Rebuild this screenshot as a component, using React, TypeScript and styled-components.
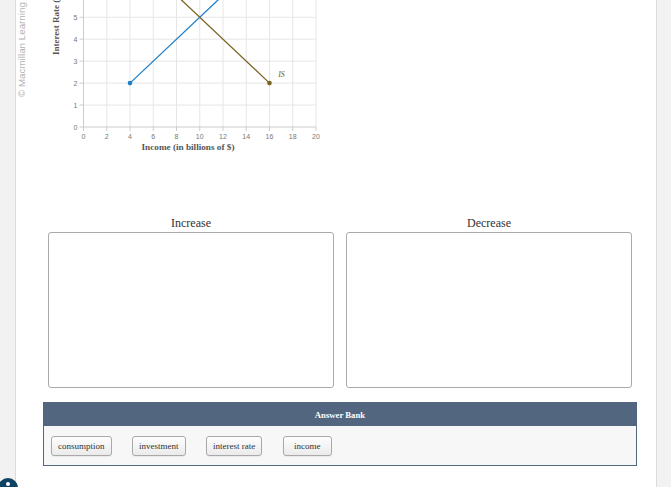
import React from "react";
import styled, { createGlobalStyle } from "styled-components";

const Global = createGlobalStyle`
  html, body { margin: 0; padding: 0; height: 487px; overflow: hidden; background: #f2f2f2; }
  #root { height: 487px; }
`;

const Page = styled.div`
  display: flex;
  height: 487px;
  position: relative;
  overflow: hidden;
`;

const Rail = styled.div<{ $side: "left" | "right" }>`
  width: ${(p) => (p.$side === "left" ? 15 : 14)}px;
  flex: none;
  background: #f2f2f2;
  ${(p) => (p.$side === "left" ? "border-right" : "border-left")}: 1px solid #dcdcdc;
`;

const Main = styled.main`
  flex: 1;
  background: #ffffff;
  display: flex;
  flex-direction: column;
`;

const ChartSvg = styled.svg`
  display: block;
  width: 320px;
  height: 160px;
  flex: none;
`;

const DropRow = styled.div`
  display: flex;
  gap: 12px;
  margin: 56px 0 0 32px;
`;

const DropColumn = styled.div`
  display: flex;
  flex-direction: column;
  width: 286px;
`;

const DropLabel = styled.div`
  font-family: "Liberation Serif", "Times New Roman", serif;
  font-size: 12px;
  line-height: 14px;
  color: #333;
  text-align: center;
  margin-bottom: 2px;
`;

const DropBox = styled.div`
  height: 156px;
  box-sizing: border-box;
  border: 1px solid #aaaaaa;
  border-radius: 3px;
  background: #fff;
`;

const Bank = styled.section`
  margin: 14px 0 0 27px;
  width: 594px;
  box-sizing: border-box;
  border: 1px solid #52667f;
`;

const BankHeader = styled.div`
  height: 23px;
  background: #52667f;
  color: #fff;
  font-family: "Liberation Serif", "Times New Roman", serif;
  font-weight: bold;
  font-size: 8.7px;
  display: flex;
  align-items: center;
  justify-content: center;
`;

const BankBody = styled.div`
  height: 39px;
  box-sizing: border-box;
  background: #f7f7f7;
  padding: 10px 0 0 7px;
  display: flex;
  gap: 20.5px;
  align-items: flex-start;
`;

const Chip = styled.div`
  height: 20px;
  min-width: 49px;
  box-sizing: border-box;
  padding: 0 6px;
  border: 1px solid #a9a9a9;
  border-radius: 3px;
  background: linear-gradient(#fdfdfd, #ebebeb);
  box-shadow: 0 1px 1px rgba(0, 0, 0, 0.06);
  font-family: "Liberation Serif", "Times New Roman", serif;
  font-size: 9px;
  color: #333;
  display: flex;
  align-items: center;
  justify-content: center;
  white-space: nowrap;
`;

const HelpBadge = styled.div`
  position: absolute;
  left: -2px;
  top: 478px;
  width: 20px;
  height: 20px;
  border-radius: 50%;
  background: #0e4264;
`;

const BadgeDot = styled.div`
  position: absolute;
  left: 8px;
  top: 4px;
  width: 4px;
  height: 4px;
  border-radius: 50%;
  background: #ffffff;
`;

const X0 = 83.5;
const XS = 11.625;
const Y0 = 127;
const YS = 21.95;
const px = (v: number) => X0 + v * XS;
const py = (v: number) => Y0 - v * YS;

const Chart: React.FC = () => {
  const xs = [0, 2, 4, 6, 8, 10, 12, 14, 16, 18, 20];
  const ys = [0, 1, 2, 3, 4, 5, 6];
  return (
    <ChartSvg viewBox="16 0 320 160">
      <text
        x={25}
        y={97}
        transform="rotate(-90 25 97)"
        fontFamily="'Liberation Sans', Arial, sans-serif"
        fontSize={9.8}
        fill="#b3b3b3"
      >
        © Macmillan Learning
      </text>
      <text
        x={58.5}
        y={55}
        transform="rotate(-90 58.5 55)"
        fontFamily="'Liberation Serif', 'Times New Roman', serif"
        fontWeight="bold"
        fontSize={9}
        fill="#555"
      >
        Interest Rate (%)
      </text>
      {xs.slice(1).map((v) => (
        <line key={"gx" + v} x1={px(v)} x2={px(v)} y1={-10} y2={Y0} stroke="#e6e6e6" strokeWidth={1} />
      ))}
      {ys.slice(1).map((v) => (
        <line key={"gy" + v} x1={X0} x2={px(20)} y1={py(v)} y2={py(v)} stroke="#e6e6e6" strokeWidth={1} />
      ))}
      <line x1={X0} x2={X0} y1={-10} y2={Y0 + 4} stroke="#cccccc" strokeWidth={1} />
      <line x1={X0 - 4} x2={px(20)} y1={Y0} y2={Y0} stroke="#cccccc" strokeWidth={1} />
      {ys.slice(1, 6).map((v) => (
        <line key={"ty" + v} x1={X0 - 4} x2={X0} y1={py(v)} y2={py(v)} stroke="#cccccc" strokeWidth={1} />
      ))}
      {xs.slice(1).map((v) => (
        <line key={"tx" + v} x1={px(v)} x2={px(v)} y1={Y0} y2={Y0 + 4} stroke="#cccccc" strokeWidth={1} />
      ))}
      {ys.slice(0, 6).map((v) => (
        <text
          key={"ly" + v}
          x={77.5}
          y={py(v) + 2.5}
          textAnchor="end"
          fontFamily="'Liberation Sans', Arial, sans-serif"
          fontSize={7}
          fill="#777"
        >
          {v}
        </text>
      ))}
      {xs.map((v) => (
        <text
          key={"lx" + v}
          x={px(v)}
          y={138.5}
          textAnchor="middle"
          fontFamily="'Liberation Sans', Arial, sans-serif"
          fontSize={7}
          fill="#777"
        >
          {v}
        </text>
      ))}
      <text
        x={188}
        y={149.5}
        textAnchor="middle"
        fontFamily="'Liberation Serif', 'Times New Roman', serif"
        fontWeight="bold"
        fontSize={9.2}
        fill="#555"
      >
        Income (in billions of $)
      </text>
      <line x1={px(4)} y1={py(2)} x2={px(12)} y2={py(6)} stroke="#1f7fc8" strokeWidth={1.3} />
      <circle cx={px(4)} cy={py(2)} r={2.3} fill="#1f7fc8" />
      <line x1={px(16)} y1={py(2)} x2={px(8)} y2={py(6)} stroke="#7a6422" strokeWidth={1.3} />
      <circle cx={px(16)} cy={py(2)} r={2.3} fill="#7a6422" />
      <text
        x={281.5}
        y={77}
        textAnchor="middle"
        fontFamily="'Liberation Serif', 'Times New Roman', serif"
        fontStyle="italic"
        fontSize={8}
        fill="#7a6422"
      >
        IS
      </text>
    </ChartSvg>
  );
};

const chips = ["consumption", "investment", "interest rate", "income"];

export default function App() {
  return (
    <>
      <Global />
      <Page>
        <Rail $side="left" />
        <Main>
          <Chart />
          <DropRow>
            <DropColumn>
              <DropLabel>Increase</DropLabel>
              <DropBox />
            </DropColumn>
            <DropColumn>
              <DropLabel>Decrease</DropLabel>
              <DropBox />
            </DropColumn>
          </DropRow>
          <Bank>
            <BankHeader>Answer Bank</BankHeader>
            <BankBody>
              {chips.map((c) => (
                <Chip key={c}>{c}</Chip>
              ))}
            </BankBody>
          </Bank>
        </Main>
        <Rail $side="right" />
        <HelpBadge>
          <BadgeDot />
        </HelpBadge>
      </Page>
    </>
  );
}
